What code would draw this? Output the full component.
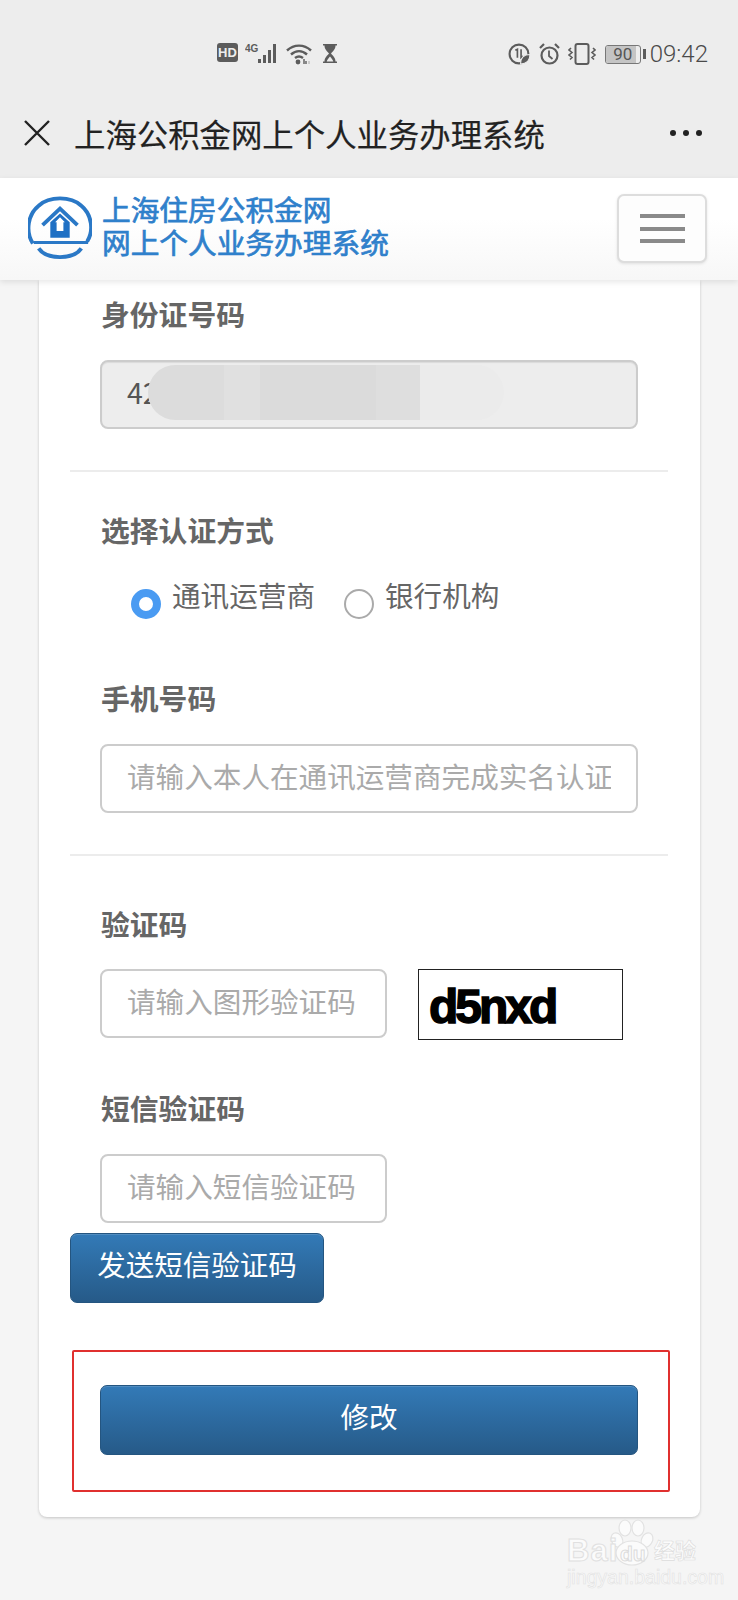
<div class="page">
  <header class="top">
    <div class="status">
      <div class="left-icons">
        <svg width="21" height="19" viewBox="0 0 21 19"><rect width="21" height="19" rx="3" fill="#5c5c5c"/><text x="10.5" y="14" text-anchor="middle" class="hd">HD</text></svg>
        <svg width="35" height="21" viewBox="0 0 35 21" class="sig">
          <text x="0" y="9" class="g4">4G</text>
          <g fill="#5c5c5c"><rect x="13" y="16" width="3" height="4"/><rect x="18" y="12" width="3" height="8"/><rect x="23" y="7" width="3" height="13"/><rect x="28" y="1" width="3" height="19"/></g>
        </svg>
        <svg width="26" height="23" viewBox="0 0 26 23" class="wifi">
          <g fill="none" stroke="#5c5c5c" stroke-width="2.4"><path d="M1 7.5C8 1 18 1 25 7.500"/><path d="M5 11.500C10 7 16 7 21 11.500"/><path d="M9 15C11.500 13 14.500 13 17 15"/></g>
          <circle cx="12" cy="19" r="2.400" fill="#5c5c5c"/><path d="M18 16v5M20 21v-3" stroke="#666" stroke-width="1.500"/><path d="M23 18v3" stroke="#aaa" stroke-width="1"/>
        </svg>
        <svg width="16" height="21" viewBox="0 0 16 21" class="hour"><path d="M1 1h14v1.500h-1.500c0 4-3 6-4.500 8 1.500 2 4.500 4 4.500 8H15V20H1v-1.500h1.500c0-4 3-6 4.500-8-1.500-2-4.500-4-4.500-8H1z" fill="#5c5c5c"/><path d="M4.700 18.500c.6-2 2.300-3.600 3.300-5 1 1.400 2.700 3 3.300 5z" fill="#ededed"/></svg>
      </div>
      <div class="right-icons">
        <svg width="23" height="22" viewBox="0 0 22 21"><circle cx="10.500" cy="10.500" r="9" fill="none" stroke="#5c5c5c" stroke-width="2"/><path d="M7 7l2-1v8M12.500 6v8l2-1.500" fill="none" stroke="#5c5c5c" stroke-width="1.600"/><path d="M12 20c0-6 3-9 9-9 0 6-3 9-9 9z" fill="#5c5c5c" stroke="#ededed"/></svg>
        <svg width="21" height="22" viewBox="0 0 21 22"><circle cx="10.500" cy="12.500" r="8" fill="none" stroke="#5c5c5c" stroke-width="2.200"/><path d="M10 7.500v5.500l3.500 3" fill="none" stroke="#5c5c5c" stroke-width="1.800"/><path d="M1 5l4-4M20 5l-4-4" stroke="#5c5c5c" stroke-width="2.200"/></svg>
        <svg width="28" height="22" viewBox="0 0 28 22"><rect x="7.500" y="1" width="13" height="20" rx="2" fill="none" stroke="#5c5c5c" stroke-width="2"/><path d="M3 5l-2 2 3 2.500-3 2.500 3 2.500-2 2M25 5l2 2-3 2.500 3 2.500-3 2.500 2 2" fill="none" stroke="#5c5c5c" stroke-width="1.600"/></svg>
        <div class="battery">
          <div class="cell"><span class="fill"></span><span class="pct">90</span></div>
          <span class="tip"></span>
        </div>
        <span class="time">09:42</span>
      </div>
    </div>
    <div class="appbar">
      <svg class="close" width="28" height="28" viewBox="0 0 28 28"><path d="M2 2l24 24M26 2L2 26" stroke="#222" stroke-width="2.400" fill="none"/></svg>
      <h1>上海公积金网上个人业务办理系统</h1>
      <div class="dots"><i></i><i></i><i></i></div>
    </div>
  </header>

  <nav class="nav">
    <div class="brand">
      <svg class="logo" width="64" height="64" viewBox="0 0 66 66">
        <g fill="none" stroke="#2a78c6">
          <path d="M5 49C-3 36 0 19 11 10 22 0 44 0 55 10c11 9 13 26 6 37" stroke-width="4"/>
          <path d="M6 48H62" stroke-width="3.200"/>
          <path d="M11 54C19 66 47 66 55 54" stroke-width="4"/>
          <path d="M15 30L33 13 51 30" stroke-width="4"/>
        </g>
        <path d="M23 27L33 18 43 27V43H23z" fill="#1f70c4"/>
        <path d="M33 22l-5 5h1.500v9h7v-9H38z" fill="#fff"/>
      </svg>
      <div class="brand-text">
        <div>上海住房公积金网</div>
        <div>网上个人业务办理系统</div>
      </div>
    </div>
    <button class="burger" aria-label="菜单"><i></i><i></i><i></i></button>
  </nav>

  <main class="card">
    <section class="group first">
      <label class="lbl" for="idno">身份证号码</label>
      <div class="redacted">
        <input id="idno" class="ipt disabled" value="42" readonly />
        <span class="blur-light"></span>
        <span class="blur-dark"></span>
      </div>
    </section>

    <hr />

    <section class="group method">
      <div class="lbl">选择认证方式</div>
      <div class="radios">
        <span class="radio on"></span><span class="rtext">通讯运营商</span>
        <span class="radio"></span><span class="rtext">银行机构</span>
      </div>
    </section>

    <section class="group phone">
      <label class="lbl" for="tel">手机号码</label>
      <input id="tel" class="ipt" placeholder="请输入本人在通讯运营商完成实名认证" />
    </section>

    <hr />

    <section class="group captcha-group">
      <label class="lbl" for="cap">验证码</label>
      <div class="captcha-row">
        <input id="cap" class="ipt short" placeholder="请输入图形验证码" />
        <div class="captcha"><span>d5nxd</span></div>
      </div>
    </section>

    <section class="group sms">
      <label class="lbl" for="sms">短信验证码</label>
      <input id="sms" class="ipt short" placeholder="请输入短信验证码" />
    </section>

    <button class="btn send">发送短信验证码</button>

    <div class="redbox">
      <button class="btn submit">修改</button>
    </div>
  </main>

  <div class="watermark">
    <svg class="paw" width="140" height="56" viewBox="0 0 140 56"><g fill="#fbfbfb" stroke="#e2e2e2" stroke-width="1.200"><ellipse cx="59" cy="10" rx="6" ry="8"/><ellipse cx="72" cy="10" rx="6" ry="8"/><ellipse cx="51" cy="22" rx="5.500" ry="7.500" transform="rotate(-25 51 22)"/><ellipse cx="81" cy="22" rx="5.500" ry="7.500" transform="rotate(25 81 22)"/><ellipse cx="66" cy="35" rx="16" ry="12"/></g></svg>
    <div class="wm-bai">Bai</div>
    <div class="wm-du">du</div>
    <div class="wm-jy">经验</div>
    <div class="wm-sub">jingyan.baidu.com</div>
  </div>
</div>

<style>
  :global(body) {
    margin: 0;
    background: #f5f5f5;
  }
  .page {
    position: relative;
    width: 738px;
    height: 1600px;
    overflow: hidden;
    background: #f5f5f5;
    font-family: "Noto Sans CJK SC", "Noto Sans", sans-serif;
  }
  .top {
    height: 178px;
    background: #ededed;
  }
  .status {
    height: 100px;
    box-sizing: border-box;
    padding: 43px 30px 0 217px;
    display: flex;
    justify-content: space-between;
    align-items: flex-start;
  }
  .left-icons {
    display: flex;
    align-items: flex-start;
    gap: 7px;
  }
  .wifi { margin-left: -1px; }
  .hour { margin-left: 3px; }
  .hd {
    font: 700 13px "Liberation Sans", sans-serif;
    fill: #ededed;
  }
  .g4 {
    font: 700 10px "Liberation Sans", sans-serif;
    fill: #5c5c5c;
  }
  .right-icons {
    display: flex;
    align-items: center;
    gap: 8px;
    height: 22px;
  }
  .battery {
    display: flex;
    align-items: center;
    gap: 2px;
    margin-left: 1px;
    margin-right: -4px;
  }
  .cell {
    position: relative;
    width: 36px;
    height: 19px;
    box-sizing: border-box;
    border: 1px solid #777;
    border-radius: 3px;
    overflow: hidden;
  }
  .fill {
    position: absolute;
    left: 0;
    top: 0;
    bottom: 0;
    width: 30px;
    background: #c4c4c4;
  }
  .pct {
    position: relative;
    display: block;
    text-align: center;
    font: 17px/17px Roboto, sans-serif;
    color: #555;
  }
  .tip {
    width: 3px;
    height: 10px;
    background: #5c5c5c;
  }
  .time {
    font: 300 24px/22px Roboto, sans-serif;
    color: #4a4a4a;
  }
  .appbar {
    height: 68px;
    box-sizing: border-box;
    padding: 0 36px 2px 23px;
    display: flex;
    align-items: center;
  }
  .close { flex: none; }
  .appbar h1 {
    margin: 0 0 0 23px;
    font-size: 31.400px;
    font-weight: 400;
    color: #222;
    white-space: nowrap;
    flex: 1;
    -webkit-text-stroke: .2px #222;
  }
  .dots {
    display: flex;
    gap: 7px;
  }
  .dots i {
    width: 6px;
    height: 6px;
    border-radius: 50%;
    background: #222;
  }
  .nav {
    position: relative;
    z-index: 2;
    height: 102px;
    box-sizing: border-box;
    padding: 16px 31px 0 28px;
    display: flex;
    justify-content: space-between;
    align-items: flex-start;
    background: linear-gradient(#fff 40%, #f7f7f7);
    box-shadow: 0 2px 6px rgba(0, 0, 0, .1);
  }
  .brand {
    display: flex;
    align-items: flex-start;
    gap: 10px;
  }
  .logo { margin-top: 2px; }
  .brand-text {
    margin-top: -2px;
    font-size: 28.700px;
    line-height: 33px;
    font-weight: 400;
    color: #2f80cb;
    -webkit-text-stroke: .7px #2f80cb;
    white-space: nowrap;
  }
  .burger {
    width: 90px;
    height: 69px;
    padding: 0;
    box-sizing: border-box;
    border: 2px solid #ddd;
    border-radius: 7px;
    background: #fdfdfd;
    box-shadow: 0 1px 3px rgba(0, 0, 0, .1);
    display: flex;
    flex-direction: column;
    align-items: center;
    justify-content: center;
    gap: 8.500px;
  }
  .burger i {
    width: 45px;
    height: 4px;
    background: #8a8a8a;
  }
  .card {
    width: 661px;
    margin-left: 39px;
    height: 1237px;
    box-sizing: border-box;
    background: #fff;
    border-radius: 0 0 8px 8px;
    box-shadow: 0 1px 3px rgba(0, 0, 0, .2);
    padding-top: 16px;
  }
  .group {
    padding: 0 62px 0 61px;
  }
  .lbl {
    display: block;
    height: 40px;
    line-height: 36px;
    margin-bottom: 23px;
    padding-left: 1px;
    font-size: 28.800px;
    font-weight: 700;
    color: #666;
    white-space: nowrap;
  }
  .first .lbl { margin-bottom: 24px; }
  .ipt {
    display: block;
    width: 100%;
    height: 69px;
    box-sizing: border-box;
    padding: 0 25px 7px;
    border: 2px solid #ccc;
    border-radius: 8px;
    outline: none;
    background: #fff;
    font-family: "Noto Sans CJK SC", "Noto Sans", sans-serif;
    font-size: 28.600px;
    color: #555;
  }
  .ipt::placeholder {
    color: #aaa;
    opacity: 1;
  }
  .disabled {
    background: #ededed;
    box-shadow: inset 0 1px 1px rgba(0, 0, 0, .08);
  }
  .short { width: 287px; }
  .redacted { position: relative; }
  .blur-light {
    position: absolute;
    left: 48px;
    top: 5px;
    width: 356px;
    height: 55px;
    border-radius: 28px;
    background: #ebebeb;
  }
  .blur-dark {
    position: absolute;
    left: 48px;
    top: 5px;
    width: 272px;
    height: 55px;
    border-radius: 28px 0 0 28px;
    background: linear-gradient(90deg, #dcdcdc 0 28%, #e0e0e0 28% 41%, #dbdbdb 41% 84%, #dedede 84%);
  }
  hr {
    margin: 41px 32px 0 31px;
    height: 2px;
    border: 0;
    background: #ececec;
  }
  .method { margin-top: 40px; }
  .method .lbl { margin-bottom: 26px; }
  .radios {
    display: flex;
    align-items: flex-start;
    height: 40px;
    padding-left: 31px;
  }
  .radio {
    flex: none;
    width: 30px;
    height: 30px;
    box-sizing: border-box;
    margin-top: 11px;
    border: 2px solid #aaa;
    border-radius: 50%;
    background: #fff;
  }
  .radio.on {
    border: 8px solid #4a9bf2;
  }
  .rtext {
    font-size: 28.600px;
    line-height: 34px;
    color: #666;
    margin: 0 29px 0 11px;
    white-space: nowrap;
  }
  .rtext:last-child { margin-right: 0; }
  .phone { margin-top: 62px; }
  .phone .lbl { margin-bottom: 24px; }
  .captcha-group { margin-top: 50px; }
  .captcha-row {
    display: flex;
    align-items: flex-start;
    gap: 31px;
  }
  .captcha {
    flex: none;
    width: 205px;
    height: 71px;
    box-sizing: border-box;
    border: 1px solid #222;
    background: #fff;
    padding-left: 10px;
    overflow: hidden;
  }
  .captcha span {
    display: block;
    font: 700 48px/73px "Liberation Sans", sans-serif;
    letter-spacing: -3px;
    color: #000;
    -webkit-text-stroke: 1.500px #000;
  }
  .sms { margin-top: 50px; }
  .sms .lbl { margin-bottom: 24px; }
  .btn {
    display: block;
    box-sizing: border-box;
    height: 70px;
    padding: 0 0 9px;
    border: 1px solid #245580;
    border-radius: 7px;
    background: linear-gradient(#337ab7, #265a88);
    box-shadow: inset 0 1px 0 rgba(255, 255, 255, .15);
    font-family: "Noto Sans CJK SC", "Noto Sans", sans-serif;
    font-size: 28.500px;
    color: #fff;
    white-space: nowrap;
  }
  .send {
    width: 254px;
    margin: 10px 0 0 31px;
  }
  .redbox {
    width: 598px;
    height: 142px;
    box-sizing: border-box;
    margin: 47px 0 0 33px;
    padding: 33px 0 0 26px;
    border: 2px solid #e0302f;
    border-radius: 2px;
  }
  .submit { width: 538px; }
  .watermark {
    position: absolute;
    left: 566px;
    top: 1518px;
    width: 140px;
    height: 70px;
  }
  .paw {
    position: absolute;
    left: 0;
    top: 0;
  }
  .wm-bai {
    position: absolute;
    left: 1px;
    top: 15px;
    font: 700 31px/36px "Liberation Sans", sans-serif;
    letter-spacing: 1px;
    color: #fbfbfb;
    -webkit-text-stroke: 1px #e0e0e0;
  }
  .wm-du {
    position: absolute;
    left: 54px;
    top: 24px;
    font: 700 21px/24px "Liberation Sans", sans-serif;
    color: #fbfbfb;
    -webkit-text-stroke: 1px #dcdcdc;
  }
  .wm-jy {
    position: absolute;
    left: 88px;
    top: 16px;
    font-family: "Noto Sans CJK SC", sans-serif;
    font-size: 21px;
    line-height: 30px;
    font-weight: 700;
    color: #fbfbfb;
    -webkit-text-stroke: .6px #dcdcdc;
    white-space: nowrap;
  }
  .wm-sub {
    position: absolute;
    left: 1px;
    top: 48px;
    font: 400 19.500px/22px "Liberation Sans", sans-serif;
    color: #fafafa;
    -webkit-text-stroke: .6px #e2e2e2;
    white-space: nowrap;
  }
</style>
